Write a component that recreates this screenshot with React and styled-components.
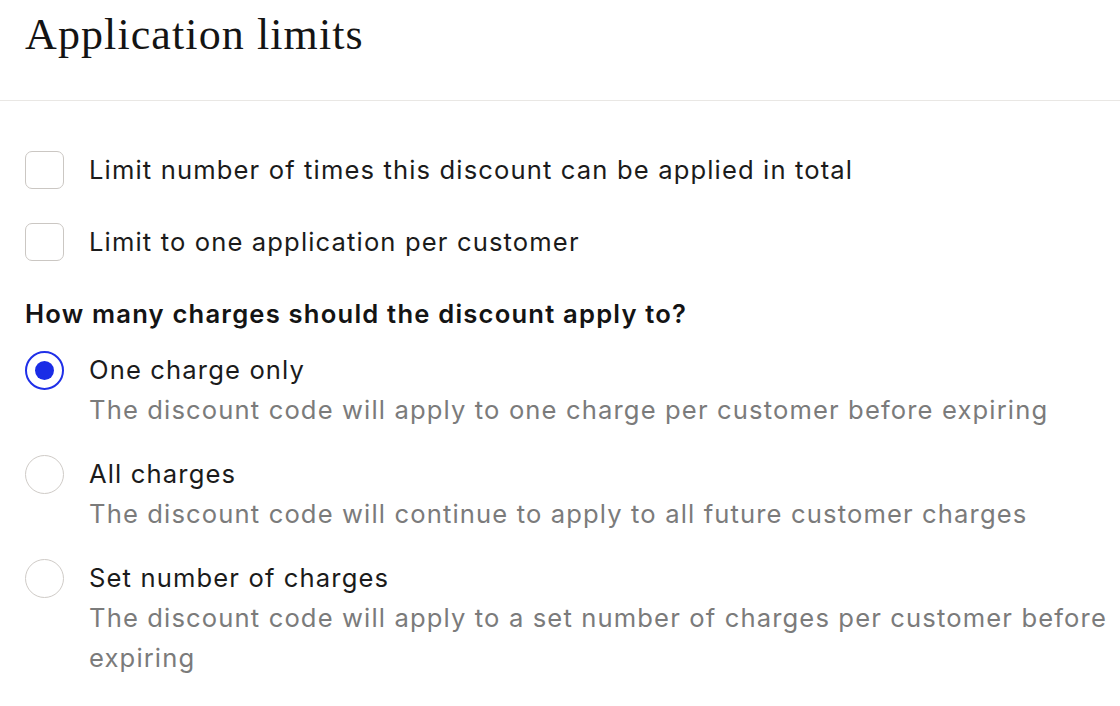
import React from "react";
import styled, { createGlobalStyle } from "styled-components";

const Global = createGlobalStyle`
  html, body { margin: 0; padding: 0; background: #fff; }
  body { font-family: Inter, "Noto Sans", sans-serif; color: #1b1b1b; }
  * { box-sizing: border-box; }
`;

const Page = styled.div`
  width: 1120px;
  height: 706px;
  overflow: hidden;
  background: #fff;
`;

const Header = styled.header`
  height: 101px;
  padding: 0 25px;
  border-bottom: 1.5px solid #e9e7e4;
  display: flex;
  align-items: flex-start;
`;

const Title = styled.h1`
  margin: 10px 0 0;
  font-family: "Liberation Serif", "Times New Roman", serif;
  font-weight: 400;
  font-size: 44px;
  line-height: 50px;
  color: #141414;
  letter-spacing: 1.1px;
`;

const Body = styled.section`
  padding: 49px 6px 0 25px;
  display: flex;
  flex-direction: column;
  letter-spacing: 1.13px;
`;

const CheckRow = styled.label`
  display: flex;
  align-items: center;
  gap: 25px;
  margin-bottom: 32px;
  font-size: 25.6px;
  line-height: 40px;
  color: #1b1b1b;
`;

const Box = styled.span`
  flex: none;
  width: 39px;
  height: 38px;
  border: 1.6px solid #cbc7c3;
  border-radius: 7px;
  background: #fff;
`;

const Question = styled.div`
  font-size: 25.6px;
  line-height: 40px;
  font-weight: 600;
  color: #141414;
  letter-spacing: 1.2px;
  margin-bottom: 16px;
`;

const Option = styled.div`
  display: flex;
  align-items: flex-start;
  gap: 25px;
  margin-bottom: 24px;
`;

const Radio = styled.span`
  flex: none;
  width: 39px;
  height: 39px;
  margin-top: 1px;
  border-radius: 50%;
  border: ${(p) => (p.$checked ? "2px solid #1f2fe8" : "1.6px solid #cfcbc7")};
  display: flex;
  align-items: center;
  justify-content: center;
  &::after {
    content: "";
    display: ${(p) => (p.$checked ? "block" : "none")};
    width: 19px;
    height: 19px;
    border-radius: 50%;
    background: #1a2ce6;
  }
`;

const OptText = styled.div`
  display: flex;
  flex-direction: column;
  font-size: 25.6px;
  line-height: 40px;
`;

const OptLabel = styled.span`
  color: #1b1b1b;
`;

const OptDesc = styled.span`
  color: #7b7b7b;
`;

const options = [
  {
    label: "One charge only",
    desc: "The discount code will apply to one charge per customer before expiring",
    checked: true,
  },
  {
    label: "All charges",
    desc: "The discount code will continue to apply to all future customer charges",
  },
  {
    label: "Set number of charges",
    desc: "The discount code will apply to a set number of charges per customer before expiring",
  },
];

export default function App() {
  return (
    <Page>
      <Global />
      <Header>
        <Title>Application limits</Title>
      </Header>
      <Body>
        <CheckRow>
          <Box />
          Limit number of times this discount can be applied in total
        </CheckRow>
        <CheckRow>
          <Box />
          Limit to one application per customer
        </CheckRow>
        <Question>How many charges should the discount apply to?</Question>
        {options.map((o) => (
          <Option key={o.label}>
            <Radio $checked={o.checked} />
            <OptText>
              <OptLabel>{o.label}</OptLabel>
              <OptDesc>{o.desc}</OptDesc>
            </OptText>
          </Option>
        ))}
      </Body>
    </Page>
  );
}
